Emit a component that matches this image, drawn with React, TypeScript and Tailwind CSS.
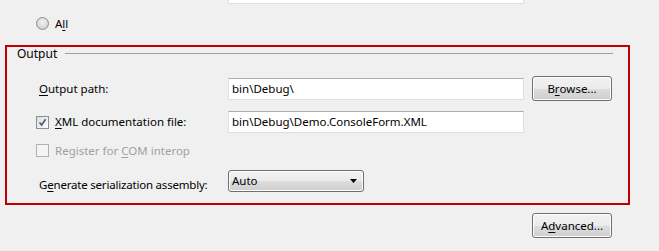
import React from "react";

const font = { fontFamily: '"Noto Sans", "Liberation Sans", sans-serif' };

function TextBox({ value, className = "" }: { value?: string; className?: string }) {
  return (
    <div
      className={`flex h-[22px] items-center border border-[#dbdfe6] border-t-[#abadb3] border-l-[#e2e3ea] bg-white pl-[3px] text-[11.5px] text-black ${className}`}
    >
      {value}
    </div>
  );
}

function Button({ children }: { children: React.ReactNode }) {
  return (
    <div className="flex h-[25px] w-[80px] items-center justify-center rounded-[3px] border border-[#707070] bg-[linear-gradient(#f2f2f2_0%,#ebebeb_50%,#dddddd_51%,#cfcfcf_100%)] text-[11.5px] text-black shadow-[inset_0_0_0_1px_#fcfcfc]">
      {children}
    </div>
  );
}

function CheckBox({ checked, disabled }: { checked?: boolean; disabled?: boolean }) {
  return (
    <div
      className={`flex h-[13px] w-[13px] shrink-0 items-center justify-center border ${
        disabled ? "border-[#b1b1b1] bg-[#f4f4f4]" : "border-[#8e8f8f] bg-[linear-gradient(135deg,#dcdcdc,#ffffff)]"
      }`}
    >
      {checked && (
        <svg width="9" height="9" viewBox="0 0 9 9">
          <path d="M1.5 4.5 L3.6 7 L7.6 1.2" fill="none" stroke="#4d5e8f" strokeWidth="1.7" />
        </svg>
      )}
    </div>
  );
}

export default function App() {
  return (
    <div className="h-[251px] w-[659px] overflow-hidden bg-[#f0f0f0] text-[11.5px] text-black" style={font}>
      <TextBox className="-mt-[18px] ml-[228px] w-[296px]" />

      <div className="mt-[13px] flex h-[13px] items-center pl-[36px]">
        <div className="h-[13px] w-[13px] rounded-full border border-[#8e8f8f] bg-[radial-gradient(circle_at_50%_40%,#f4f4f4_0%,#d8d8d8_60%,#c6c6c6_100%)]" />
        <span className="ml-[6px] leading-[13px]">
          A<span className="underline underline-offset-2">l</span>l
        </span>
      </div>

      <div className="ml-[5px] mt-[15px] h-[160px] w-[625px] border-2 border-[#c00000]">
        <div className="flex h-[13px] items-center pl-[10px] pr-[15px]">
          <span className="mr-[8px] text-[12px] leading-[13px]">Output</span>
          <div className="h-px flex-1 bg-[#a0a0a0]" />
        </div>

        <div className="mt-[16px] flex h-[25px] items-center">
          <div className="w-[221px] pl-[32px]">
            <span className="underline underline-offset-2">O</span>utput path:
          </div>
          <TextBox value="bin\Debug\" className="w-[296px]" />
          <div className="ml-[8px]">
            <Button>
              B<span className="underline underline-offset-2">r</span>owse...
            </Button>
          </div>
        </div>

        <div className="mt-[10px] flex h-[22px] items-center">
          <div className="flex w-[221px] items-center pl-[29px]">
            <CheckBox checked />
            <span className="ml-[6px]">
              <span className="underline underline-offset-2">X</span>ML documentation file:
            </span>
          </div>
          <TextBox value="bin\Debug\Demo.ConsoleForm.XML" className="w-[296px]" />
        </div>

        <div className="mt-[11px] flex h-[13px] items-center pl-[29px]">
          <CheckBox disabled />
          <span className="ml-[6px] text-[#a0a0a0]">
            Register for <span className="underline underline-offset-2">C</span>OM interop
          </span>
        </div>

        <div className="mt-[13px] flex h-[22px] items-center">
          <div className="w-[221px] pl-[32px] pt-[8px] tracking-[-0.2px]">
            G<span className="underline underline-offset-2">e</span>nerate serialization assembly:
          </div>
          <div className="flex h-[22px] w-[136px] items-center justify-between rounded-[3px] border border-[#707070] bg-[linear-gradient(#f2f2f2_0%,#ebebeb_50%,#dddddd_51%,#cfcfcf_100%)] pl-[3px] pr-[6px] shadow-[inset_0_0_0_1px_#fcfcfc]">
            <span>Auto</span>
            <svg width="7" height="4" viewBox="0 0 7 4">
              <path d="M0 0 H7 L3.5 4 Z" fill="#000" />
            </svg>
          </div>
        </div>
      </div>

      <div className="ml-[532px] mt-[8px]">
        <Button>
          A<span className="underline underline-offset-2">d</span>vanced...
        </Button>
      </div>
    </div>
  );
}
